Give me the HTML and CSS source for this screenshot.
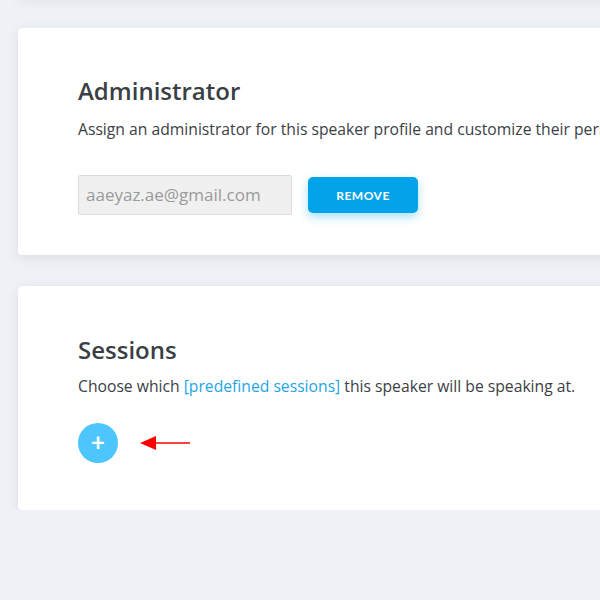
FILE: index.html
```html
<!DOCTYPE html>
<html>
<head>
<meta charset="utf-8">
<link rel="stylesheet" href="styles.css">
</head>
<body>
<div class="page">
  <div class="card card-prev"></div>
  <section class="card card-admin">
    <h2 class="title">Administrator</h2>
    <p class="desc">Assign an administrator for this speaker profile and customize their permissions.</p>
    <div class="admin-row">
      <div class="input">aaeyaz.ae@gmail.com</div>
      <button class="btn">REMOVE</button>
    </div>
  </section>
  <section class="card card-sessions">
    <h2 class="title">Sessions</h2>
    <p class="desc">Choose which <span class="link">[predefined sessions]</span> this speaker will be speaking at.</p>
    <div class="add-row">
      <div class="add">+</div>
      <svg class="arrow" width="56" height="20" viewBox="0 0 56 20">
        <polygon points="2,10 18,3 18,17" fill="#ff0000"/>
        <line x1="16" y1="10" x2="52" y2="10" stroke="#ff0000" stroke-width="1.5"/>
      </svg>
    </div>
  </section>
</div>
</body>
</html>
```
FILE: styles.css
```css
html, body {
  margin: 0;
  padding: 0;
  background: #eef1f5;
  overflow: hidden;
}
body {
  font-family: "Open Sans", Lato, sans-serif;
  color: #3b4045;
}
.page {
  padding-left: 18px;
  display: flex;
  flex-direction: column;
  gap: 31px;
}
.card {
  background: #ffffff;
  width: 700px;
  border-radius: 4px;
  box-shadow: 0 3px 12px rgba(60, 70, 90, 0.10);
  box-sizing: border-box;
  padding-left: 60px;
}
.card-prev {
  height: 10px;
  margin-top: -13px;
}
.card-admin {
  height: 227px;
  padding-top: 47px;
}
.card-sessions {
  height: 224px;
  padding-top: 48px;
}
.title {
  margin: 0;
  font-size: 24px;
  line-height: 32px;
  font-weight: 600;
  color: #3a3f44;
}
.desc {
  margin: 12px 0 0;
  font-size: 15.7px;
  line-height: 20px;
  white-space: nowrap;
  color: #3b4045;
}
.card-sessions .desc {
  margin-top: 10px;
}
.link {
  color: #1ea5e6;
}
.admin-row {
  margin-top: 36px;
  display: flex;
  align-items: center;
  gap: 16px;
}
.input {
  width: 214px;
  height: 40px;
  box-sizing: border-box;
  background: #f0f0f0;
  border: 1px solid #dcdcdc;
  border-radius: 2px;
  padding-left: 7px;
  font-size: 17px;
  line-height: 38px;
  color: #9a9a9a;
}
.btn {
  width: 110px;
  height: 36px;
  border: 0;
  border-radius: 5px;
  background: #03a3ea;
  color: #ffffff;
  font-family: Lato, sans-serif;
  font-weight: 700;
  font-size: 12px;
  letter-spacing: 0.5px;
  box-shadow: 0 4px 10px rgba(3, 163, 234, 0.35);
}
.add-row {
  margin-top: 27px;
  display: flex;
  align-items: center;
  gap: 20px;
}
.add {
  width: 40px;
  height: 40px;
  border-radius: 50%;
  background: #4cc6fd;
  color: #ffffff;
  font-family: Lato, sans-serif;
  font-size: 24px;
  font-weight: 700;
  line-height: 38px;
  text-align: center;
}
.arrow {
  display: block;
}
```
